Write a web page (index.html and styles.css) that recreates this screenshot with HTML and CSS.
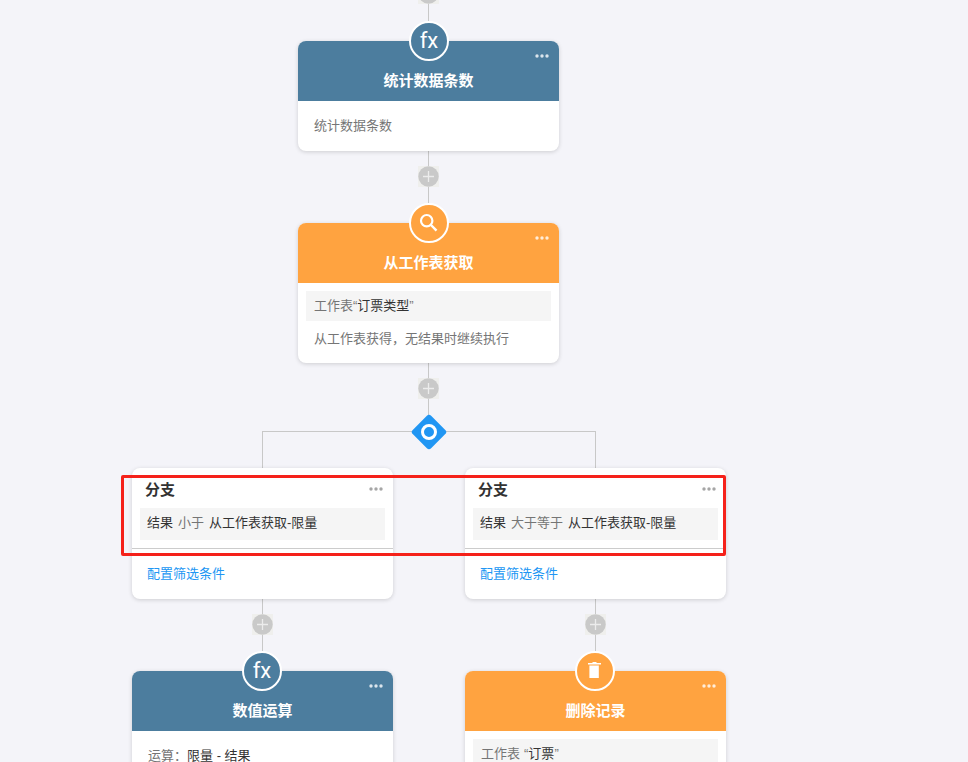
FILE: index.html
```html
<!DOCTYPE html>
<html lang="zh-CN">
<head>
<meta charset="utf-8">
<title>工作流</title>
<link rel="stylesheet" href="styles.css">
</head>
<body>
<svg class="defs" width="0" height="0" aria-hidden="true">
  <symbol id="plus" viewBox="0 0 21 21">
    <rect width="21" height="21" fill="#efefed"/>
    <circle cx="10.5" cy="10.5" r="10.2" fill="#c9c9c9"/>
    <path d="M10.5 5v11M5 10.5h11" stroke="#ececec" stroke-width="1.3" fill="none"/>
  </symbol>
  <symbol id="dots" viewBox="0 0 14 4">
    <circle cx="2" cy="2" r="1.7"/><circle cx="7" cy="2" r="1.7"/><circle cx="12" cy="2" r="1.7"/>
  </symbol>
</svg>
<main class="flow">
  <div class="stem">
    <svg class="plus"><use href="#plus"/></svg>
    <div class="line line-37"></div>
    <section class="card">
      <header class="head head-blue">
        <span class="badge badge-main badge-blue fx">fx</span>
        <svg class="dots dots-light"><use href="#dots"/></svg>
        <h2 class="title">统计数据条数</h2>
      </header>
      <p class="desc desc-only">统计数据条数</p>
    </section>
    <div class="line line-15"></div>
    <svg class="plus"><use href="#plus"/></svg>
    <div class="line line-36"></div>
    <section class="card">
      <header class="head head-orange">
        <span class="badge badge-main badge-orange">
          <svg class="glyph" viewBox="0 0 36 36"><circle cx="15.7" cy="15.7" r="5.7" fill="none" stroke="#fff" stroke-width="2.2"/><path d="M20 20l5.5 5.7" stroke="#fff" stroke-width="2.4" fill="none"/></svg>
        </span>
        <svg class="dots dots-light"><use href="#dots"/></svg>
        <h2 class="title">从工作表获取</h2>
      </header>
      <div class="info info-first"><span class="muted">工作表“</span><span class="dark">订票类型</span><span class="muted">”</span></div>
      <p class="desc desc-after">从工作表获得，无结果时继续执行</p>
    </section>
    <div class="line line-15"></div>
    <svg class="plus"><use href="#plus"/></svg>
    <div class="line line-32"></div>
  </div>
  <div class="split">
    <div class="diamond"><span class="ring"></span></div>
  </div>
  <div class="branches">
    <div class="branch">
      <section class="card">
        <svg class="dots dots-gray"><use href="#dots"/></svg>
        <h3 class="branch-title">分支</h3>
        <div class="info cond"><span class="dark gap-5">结果</span><span class="muted gap-5">小于</span><span class="dark">从工作表获取-限量</span></div>
        <div class="rule"></div>
        <a class="config">配置筛选条件</a>
      </section>
      <div class="line line-15"></div>
      <svg class="plus"><use href="#plus"/></svg>
      <div class="line line-36"></div>
      <section class="card">
        <header class="head head-blue">
          <span class="badge badge-blue fx">fx</span>
          <svg class="dots dots-light"><use href="#dots"/></svg>
          <h2 class="title">数值运算</h2>
        </header>
        <p class="desc desc-calc"><span class="muted">运算：</span><span class="dark">限量 - 结果</span></p>
      </section>
    </div>
    <div class="branch">
      <section class="card">
        <svg class="dots dots-gray"><use href="#dots"/></svg>
        <h3 class="branch-title">分支</h3>
        <div class="info cond"><span class="dark gap-5">结果</span><span class="muted gap-5">大于等于</span><span class="dark">从工作表获取-限量</span></div>
        <div class="rule"></div>
        <a class="config">配置筛选条件</a>
      </section>
      <div class="line line-15"></div>
      <svg class="plus"><use href="#plus"/></svg>
      <div class="line line-36"></div>
      <section class="card">
        <header class="head head-orange">
          <span class="badge badge-orange">
            <svg class="glyph" viewBox="0 0 36 36"><path d="M15.5 9h4v1h4.5v1.5H11V10h4.5zM12.4 12.5h9.4V25h-9.4z" fill="#fff"/></svg>
          </span>
          <svg class="dots dots-light"><use href="#dots"/></svg>
          <h2 class="title">删除记录</h2>
        </header>
        <div class="info info-first"><span class="muted gap-4">工作表</span><span class="muted">“</span><span class="dark">订票</span><span class="muted">”</span></div>
      </section>
    </div>
  </div>
</main>
<div class="highlight"></div>
</body>
</html>
```

FILE: styles.css
```css
* { box-sizing: border-box; }

html, body {
  height: 100%;
}

body {
  margin: 0;
  overflow: hidden;
  background: #f4f4f9;
  color: #333;
  font-family: "Liberation Sans", "Noto Sans CJK SC", sans-serif;
  font-size: 13px;
  position: relative;
}

.defs { position: absolute; }

.flow {
  width: 594px;
  margin: -17px 0 0 132px;
}

.stem {
  width: 261px;
  margin-left: 166px;
  display: flex;
  flex-direction: column;
  align-items: center;
}

.line {
  width: 1px;
  background: #c8c8c8;
  flex: none;
}
.line-15 { height: 15px; }
.line-32 { height: 32px; }
.line-36 { height: 36px; }
.line-37 { height: 37px; }

.plus {
  display: block;
  width: 21px;
  height: 21px;
  flex: none;
}

.card {
  position: relative;
  width: 261px;
  background: #fff;
  border-radius: 8px;
  box-shadow: 0 1px 4px rgba(0, 0, 0, 0.16);
}

.head {
  position: relative;
  height: 60px;
  padding-top: 30px;
  border-radius: 8px 8px 0 0;
}
.head-blue { background: #4c7d9e; }
.head-orange { background: #ffa340; }

.title {
  margin: 0;
  color: #fff;
  font-size: 15px;
  font-weight: 700;
  line-height: 20px;
  text-align: center;
}

.badge {
  position: absolute;
  top: -20px;
  left: 110px;
  width: 40px;
  height: 40px;
  border: 2px solid #fff;
  border-radius: 50%;
  color: #fff;
  text-align: center;
}
.badge-main { left: 111px; }
.badge-blue { background: #4c7d9e; }
.badge-orange { background: #ffa340; }

.fx {
  font-family: Roboto, sans-serif;
  font-size: 22px;
  font-weight: 400;
  line-height: 36px;
}

.glyph {
  display: block;
  width: 36px;
  height: 36px;
}

.dots {
  position: absolute;
  top: 13px;
  right: 10px;
  width: 14px;
  height: 4px;
}
.dots-light { fill: rgba(255, 255, 255, 0.8); }
.dots-gray { fill: #a6a6a6; top: 19px; }

.desc {
  margin: 0;
  padding: 0 16px;
  color: #757575;
  line-height: 20px;
}
.desc-only { padding-top: 15px; padding-bottom: 15px; }
.desc-after { padding-top: 8px; padding-bottom: 14px; }
.desc-calc { padding-top: 15px; padding-bottom: 15px; }

.info {
  margin: 0 8px;
  padding: 0 8px;
  background: #f5f5f5;
  line-height: 30px;
  height: 30px;
}
.info-first { margin-top: 8px; display: block; }

.muted { color: #757575; }
.dark { color: #333; }
.gap-5 { margin-right: 5px; }
.gap-4 { margin-right: 4px; }

.split {
  position: relative;
  width: 334px;
  height: 37px;
  margin-left: 130px;
  border: 1px solid #c8c8c8;
  border-bottom: 0;
}

.diamond {
  position: absolute;
  top: -13px;
  left: 152.5px;
  width: 26px;
  height: 26px;
  border-radius: 3px;
  background: #2196f3;
  transform: rotate(45deg);
  display: flex;
  align-items: center;
  justify-content: center;
}

.ring {
  width: 16px;
  height: 16px;
  border: 3px solid #fff;
  border-radius: 50%;
}

.branches {
  display: flex;
  gap: 72px;
}

.branch {
  width: 261px;
  display: flex;
  flex-direction: column;
  align-items: center;
}

.branch-title {
  margin: 0;
  height: 40px;
  padding: 12px 0 0 13px;
  color: #333;
  font-size: 15px;
  font-weight: 700;
  line-height: 20px;
}

.cond {
  height: 32px;
  padding-left: 7px;
  line-height: 30px;
}

.rule {
  height: 1px;
  margin-top: 8px;
  background: #ccc;
}

.config {
  display: block;
  height: 50px;
  padding-left: 15px;
  color: #2196f3;
  line-height: 50px;
}

.highlight {
  position: absolute;
  left: 121px;
  top: 475px;
  width: 605px;
  height: 81px;
  border: 3px solid #f5211a;
  border-radius: 2px;
}
```
